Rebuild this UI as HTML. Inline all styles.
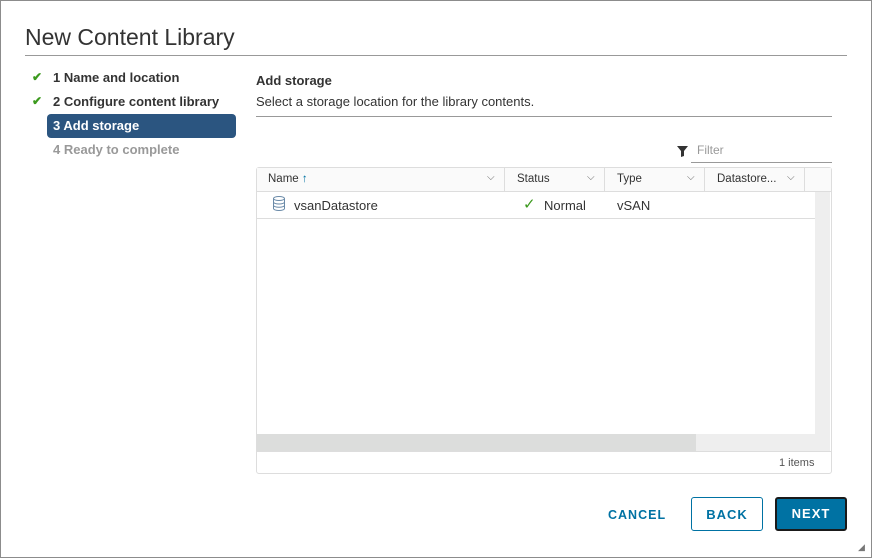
<!DOCTYPE html><html><head><style>
body{margin:0;width:872px;height:558px;overflow:hidden;font-family:"Liberation Sans",sans-serif;background:#fff}
.f{position:absolute;left:0;top:0;width:870px;height:556px;border:1px solid #8c8c8c;}
.a{position:absolute;white-space:nowrap}
.ck{color:#3c9a1e;font-size:12px;font-weight:bold}
.st{font-size:13px;font-weight:bold;color:#333}
.h{font-size:11.5px;color:#333;top:172px;line-height:14px}
.chev{position:absolute;top:172px;font-size:10px;color:#666}
.vl{position:absolute;top:168px;height:23px;width:1px;background:#ddd}
.btn{position:absolute;top:497px;height:34px;width:72px;box-sizing:border-box;border-radius:3px;font-size:13px;letter-spacing:1px;text-align:center;line-height:34px;font-weight:bold}
</style></head><body>
<div class="f"></div>
<div class="a" style="left:25px;top:24px;font-size:23px;color:#333;font-weight:300">New Content Library</div>
<div class="a" style="left:25px;top:55px;width:822px;height:1px;background:#999"></div>
<div class="a ck" style="left:32px;top:70px">✔</div>
<div class="a st" style="left:53px;top:70px">1 Name and location</div>
<div class="a ck" style="left:32px;top:94px">✔</div>
<div class="a st" style="left:53px;top:94px">2 Configure content library</div>
<div class="a" style="left:47px;top:114px;width:189px;height:24px;background:#2b5580;border-radius:4px"></div>
<div class="a st" style="left:53px;top:118px;color:#fff">3 Add storage</div>
<div class="a st" style="left:53px;top:142px;color:#999">4 Ready to complete</div>
<div class="a" style="left:256px;top:73px;font-size:13px;font-weight:bold;color:#333">Add storage</div>
<div class="a" style="left:256px;top:94px;font-size:13px;color:#333">Select a storage location for the library contents.</div>
<div class="a" style="left:256px;top:116px;width:576px;height:1px;background:#999"></div>
<svg class="a" style="left:677px;top:146px" width="11" height="11" viewBox="0 0 11 11"><path d="M0 0H11L7 5V10L4 11V5Z" fill="#333"/></svg>
<div class="a" style="left:697px;top:143px;font-size:12px;color:#999">Filter</div>
<div class="a" style="left:691px;top:162px;width:141px;height:1px;background:#999"></div>
<div class="a" style="left:256px;top:167px;width:574px;height:305px;border:1px solid #ddd;border-radius:3px"></div>
<div class="a" style="left:257px;top:168px;width:574px;height:23px;background:#fafafa;border-bottom:1px solid #ddd"></div>
<div class="a h" style="left:268px">Name <span style="color:#0072a3">↑</span></div>
<div class="a h" style="left:517px">Status</div><div class="a h" style="left:617px">Type</div><div class="a h" style="left:717px">Datastore...</div>
<div class="chev" style="left:487px">⌵</div><div class="chev" style="left:587px">⌵</div><div class="chev" style="left:687px">⌵</div><div class="chev" style="left:787px">⌵</div>
<div class="vl" style="left:504px"></div><div class="vl" style="left:604px"></div><div class="vl" style="left:704px"></div><div class="vl" style="left:804px"></div>
<svg class="a" style="left:272px;top:196px" width="14" height="15" viewBox="0 0 14 15"><ellipse cx="7" cy="2.5" rx="5.5" ry="2" fill="none" stroke="#6a8aa8"/><path d="M1.5 2.5V12.5A5.5 2 0 0 0 12.5 12.5V2.5M1.5 6A5.5 2 0 0 0 12.5 6M1.5 9.3A5.5 2 0 0 0 12.5 9.3" fill="none" stroke="#6a8aa8"/></svg>
<div class="a" style="left:294px;top:198px;font-size:13px;color:#333">vsanDatastore</div>
<div class="a" style="left:523px;top:195px;font-size:15px;color:#3c9a1e">✓</div>
<div class="a" style="left:544px;top:198px;font-size:13px;color:#333">Normal</div>
<div class="a" style="left:617px;top:198px;font-size:13px;color:#333">vSAN</div>
<div class="a" style="left:257px;top:218px;width:558px;height:1px;background:#ddd"></div>
<div class="a" style="left:815px;top:192px;width:15px;height:242px;background:#eee"></div>
<div class="a" style="left:257px;top:434px;width:573px;height:17px;background:#eee"></div>
<div class="a" style="left:257px;top:434px;width:439px;height:17px;background:#dcdddc"></div>
<div class="a" style="left:257px;top:451px;width:574px;height:1px;background:#ddd"></div>
<div class="a" style="left:779px;top:457px;font-size:11px;color:#555">1 items</div>
<div class="a" style="left:608px;top:508px;font-size:13px;letter-spacing:1px;color:#0072a3;font-weight:bold;font-size:12.5px">CANCEL</div>
<div class="btn" style="left:691px;border:1px solid #0072a3;color:#0072a3">BACK</div>
<div class="btn" style="left:775px;background:#0072a3;border:2px solid #1a1a1a;color:#fff;line-height:30px">NEXT</div>
<div class="a" style="left:858px;top:542px;font-size:9px;color:#777">◢</div>
</body></html>
